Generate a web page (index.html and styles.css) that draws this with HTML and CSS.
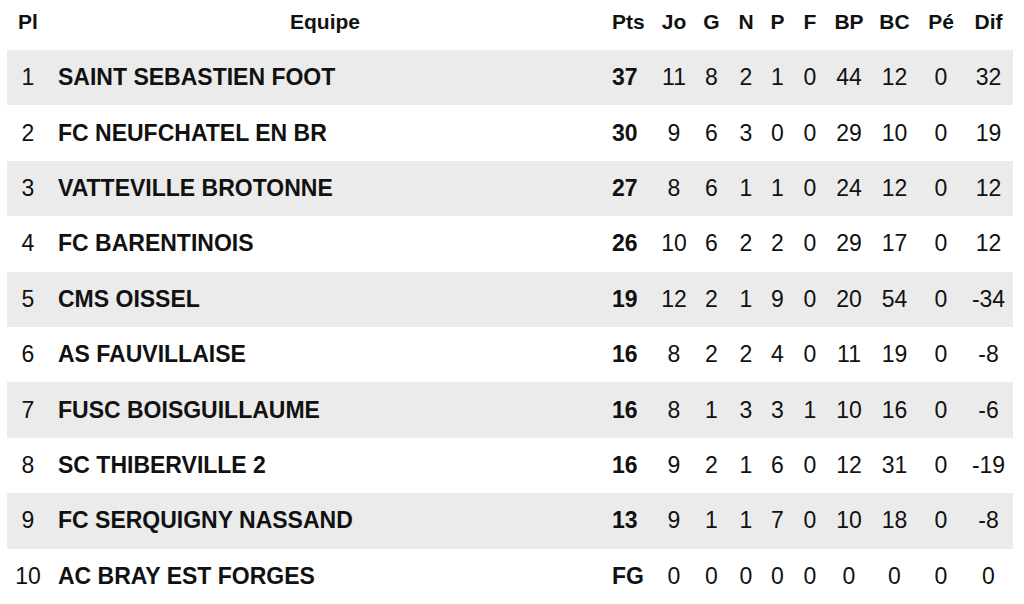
FILE: index.html
```html
<!DOCTYPE html>
<html lang="fr">
<head>
<meta charset="utf-8">
<title>Classement</title>
<link rel="stylesheet" href="styles.css">
</head>
<body>
<div class="wrap">
<table class="standings">
  <colgroup>
    <col class="c-pl"><col class="c-team"><col class="c-pts"><col class="c-jo"><col class="c-g"><col class="c-n"><col class="c-p"><col class="c-f"><col class="c-bp"><col class="c-bc"><col class="c-pe"><col class="c-dif">
  </colgroup>
  <thead>
    <tr><th>Pl</th><th>Equipe</th><th class="pts">Pts</th><th>Jo</th><th>G</th><th>N</th><th>P</th><th>F</th><th>BP</th><th>BC</th><th>Pé</th><th>Dif</th></tr>
  </thead>
  <tbody>
    <tr><td>1</td><td class="team">SAINT SEBASTIEN FOOT</td><td class="pts">37</td><td>11</td><td>8</td><td>2</td><td>1</td><td>0</td><td>44</td><td>12</td><td>0</td><td>32</td></tr>
    <tr><td>2</td><td class="team">FC NEUFCHATEL EN BR</td><td class="pts">30</td><td>9</td><td>6</td><td>3</td><td>0</td><td>0</td><td>29</td><td>10</td><td>0</td><td>19</td></tr>
    <tr><td>3</td><td class="team">VATTEVILLE BROTONNE</td><td class="pts">27</td><td>8</td><td>6</td><td>1</td><td>1</td><td>0</td><td>24</td><td>12</td><td>0</td><td>12</td></tr>
    <tr><td>4</td><td class="team">FC BARENTINOIS</td><td class="pts">26</td><td>10</td><td>6</td><td>2</td><td>2</td><td>0</td><td>29</td><td>17</td><td>0</td><td>12</td></tr>
    <tr><td>5</td><td class="team">CMS OISSEL</td><td class="pts">19</td><td>12</td><td>2</td><td>1</td><td>9</td><td>0</td><td>20</td><td>54</td><td>0</td><td>-34</td></tr>
    <tr><td>6</td><td class="team">AS FAUVILLAISE</td><td class="pts">16</td><td>8</td><td>2</td><td>2</td><td>4</td><td>0</td><td>11</td><td>19</td><td>0</td><td>-8</td></tr>
    <tr><td>7</td><td class="team">FUSC BOISGUILLAUME</td><td class="pts">16</td><td>8</td><td>1</td><td>3</td><td>3</td><td>1</td><td>10</td><td>16</td><td>0</td><td>-6</td></tr>
    <tr><td>8</td><td class="team">SC THIBERVILLE 2</td><td class="pts">16</td><td>9</td><td>2</td><td>1</td><td>6</td><td>0</td><td>12</td><td>31</td><td>0</td><td>-19</td></tr>
    <tr><td>9</td><td class="team">FC SERQUIGNY NASSAND</td><td class="pts">13</td><td>9</td><td>1</td><td>1</td><td>7</td><td>0</td><td>10</td><td>18</td><td>0</td><td>-8</td></tr>
    <tr><td>10</td><td class="team">AC BRAY EST FORGES</td><td class="pts">FG</td><td>0</td><td>0</td><td>0</td><td>0</td><td>0</td><td>0</td><td>0</td><td>0</td><td>0</td></tr>
  </tbody>
</table>
</div>
</body>
</html>
```
FILE: styles.css
```css
html, body {
  margin: 0;
  padding: 0;
  background: #ffffff;
}

body {
  font-family: "Liberation Sans", Arial, Helvetica, sans-serif;
  color: #111111;
}

.wrap {
  padding-left: 7px;
}

.standings {
  width: 1006px;
  table-layout: fixed;
  border-collapse: collapse;
  border-spacing: 0;
}

.c-pl { width: 42px; }
.c-team { width: 552px; }
.c-pts { width: 54px; }
.c-jo { width: 38px; }
.c-g { width: 37px; }
.c-n { width: 32px; }
.c-p { width: 31px; }
.c-f { width: 34px; }
.c-bp { width: 44px; }
.c-bc { width: 47px; }
.c-pe { width: 46px; }
.c-dif { width: 49px; }

.standings th {
  height: 50px;
  padding: 0 0 6px 0;
  box-sizing: border-box;
  font-size: 21px;
  font-weight: bold;
  text-align: center;
  vertical-align: middle;
  white-space: nowrap;
}

.standings td {
  height: 55.4px;
  padding: 0;
  box-sizing: border-box;
  font-size: 23px;
  text-align: center;
  vertical-align: middle;
  white-space: nowrap;
}

.standings tbody tr:nth-child(odd) td {
  background: #ebebeb;
}

.standings td.team {
  text-align: left;
  padding-left: 9px;
  font-weight: bold;
}

.standings .pts {
  text-align: left;
  padding-left: 11px;
}

.standings td.pts {
  font-weight: bold;
}
```
